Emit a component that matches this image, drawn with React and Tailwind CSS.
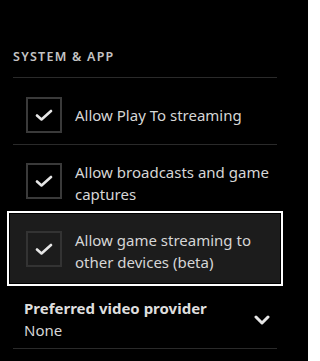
import React from "react";

function Check() {
  return (
    <svg width="18" height="12" viewBox="0 0 18 12" fill="none">
      <path d="M2 6.5 L6.5 10.5 L16 2" stroke="#e6e6e6" strokeWidth="2.6" strokeLinecap="round" strokeLinejoin="round" />
    </svg>
  );
}

function Box({ dark }) {
  return (
    <div className={`w-[36px] h-[36px] shrink-0 border-2 flex items-center justify-center ${dark ? "border-[#333333]" : "border-[#3a3a3a]"}`}>
      <Check />
    </div>
  );
}

export default function App() {
  return (
    <div className="w-[308px] h-[361px] bg-black overflow-hidden text-[#d6d6d6] font-['Noto_Sans',sans-serif]">
      <div className="pt-[48px] pl-[13px] w-[277px]">
        <div className="h-[18px] leading-[18px] text-[12.5px] font-semibold tracking-[0.1em] text-[#c4c4c4]">SYSTEM &amp; APP</div>
        <div className="h-px bg-[#2a2a2a] mt-[11px]" />
        <div className="flex items-center pt-[19px] pb-[11px] pl-[13px]">
          <Box />
          <div className="ml-[13px] text-[15px] leading-[22px]">Allow Play To streaming</div>
        </div>
        <div className="h-px bg-[#2a2a2a]" />
        <div className="flex items-start pt-[16px] pl-[13px]">
          <div className="mt-[2px]"><Box /></div>
          <div className="ml-[13px] text-[15px] leading-[22px]">Allow broadcasts and game<br />captures</div>
        </div>
        <div className="mt-[6px] -ml-[6px] w-[276px] border-2 border-white p-px">
          <div className="bg-[#1c1c1c] flex items-start pl-[16px] pt-[15px] pb-[10px]">
            <div className="mt-[2px]"><Box dark /></div>
            <div className="ml-[13px] text-[15px] leading-[22px]">Allow game streaming to<br />other devices (beta)</div>
          </div>
        </div>
        <div className="mt-[11px] pl-[11px] flex items-center justify-between pr-[7px]">
          <div>
            <div className="text-[15px] leading-[22px] font-bold text-[#dedede]">Preferred video provider</div>
            <div className="text-[15px] leading-[22px]">None</div>
          </div>
          <svg width="16" height="10" viewBox="0 0 16 10" fill="none" className="mt-[1px]">
            <path d="M2 2 L8 8 L14 2" stroke="#e6e6e6" strokeWidth="3" strokeLinecap="round" strokeLinejoin="round" />
          </svg>
        </div>
        <div className="h-px bg-[#2a2a2a] mt-[7px]" />
      </div>
    </div>
  );
}
